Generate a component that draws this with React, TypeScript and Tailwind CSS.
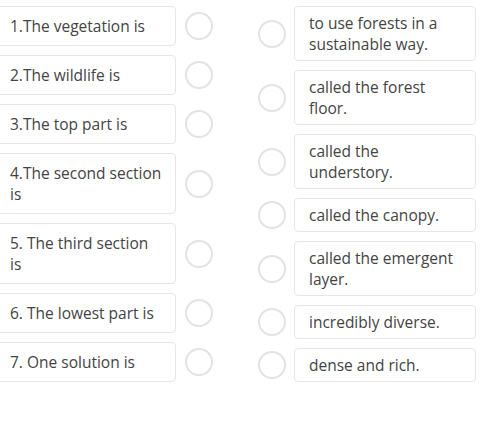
import React from "react";

const left = [
  "1.The vegetation is",
  "2.The wildlife is",
  "3.The top part is",
  "4.The second section is",
  "5. The third section is",
  "6. The lowest part is",
  "7. One solution is",
];

const right = [
  "to use forests in a sustainable way.",
  "called the forest floor.",
  "called the understory.",
  "called the canopy.",
  "called the emergent layer.",
  "incredibly diverse.",
  "dense and rich.",
];

function Circle() {
  return <div className="w-[28px] h-[28px] shrink-0 rounded-full border-2 border-[#e3e3e3] bg-white" />;
}

export default function App() {
  return (
    <div
      className="w-[500px] h-[437px] bg-white overflow-hidden flex text-[15.5px] leading-[21px] text-[#444444]"
      style={{ fontFamily: '"Open Sans", sans-serif' }}
    >
      <div className="flex flex-col gap-[9px] pt-[6px] w-[258px] shrink-0">
        {left.map((t) => (
          <div key={t} className="flex items-center">
            <div className="-ml-[5px] w-[181px] shrink-0 border border-[#e6e6e6] rounded-[4px] pl-[14px] pr-[12px] py-[8.5px]">
              {t}
            </div>
            <div className="ml-[9px]">
              <Circle />
            </div>
          </div>
        ))}
      </div>
      <div className="flex flex-col gap-[9px] pt-[6px]">
        {right.map((t) => (
          <div key={t} className="flex items-center">
            <Circle />
            <div className="ml-[8px] w-[182px] shrink-0 border border-[#e6e6e6] rounded-[4px] pl-[14px] pr-[16px] py-[5.5px]">
              {t}
            </div>
          </div>
        ))}
      </div>
    </div>
  );
}
